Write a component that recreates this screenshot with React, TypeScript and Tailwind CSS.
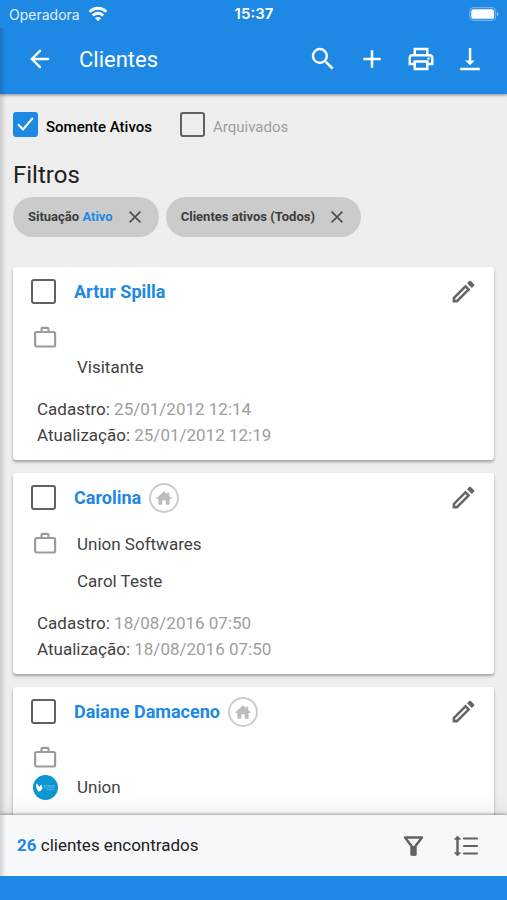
import { ReactNode } from 'react';
import { MdSearch, MdAdd, MdOutlinePrint } from 'react-icons/md';
import { ArrowLeft } from 'lucide-react';

type Client = {
  name: string;
  home?: boolean;
  company?: string;
  person: string;
  logo?: boolean;
  created?: string;
  updated?: string;
};

const clients: Client[] = [
  { name: 'Artur Spilla', person: 'Visitante', created: '25/01/2012 12:14', updated: '25/01/2012 12:19' },
  {
    name: 'Carolina',
    home: true,
    company: 'Union Softwares',
    person: 'Carol Teste',
    created: '18/08/2016 07:50',
    updated: '18/08/2016 07:50',
  },
  { name: 'Daiane Damaceno', home: true, person: 'Union', logo: true },
];

function WifiIcon() {
  return (
    <svg viewBox="0 0 20 16" className="h-4 w-5" fill="none" stroke="#fff" strokeWidth="2.8" aria-hidden="true">
      <path d="M1.600 5.700a12 12 0 0 1 16.800 0" />
      <path d="M4.800 9.400a7.400 7.400 0 0 1 10.400 0" />
      <path d="M10 15.200 7 12.300a4.200 4.200 0 0 1 6 0z" fill="#fff" stroke="none" />
    </svg>
  );
}

function BatteryIcon() {
  return (
    <svg viewBox="0 0 30 14" className="h-3.5 w-[30px]" aria-hidden="true">
      <rect x="0.700" y="0.700" width="26" height="12.600" rx="4" fill="none" stroke="#6fb2ee" strokeWidth="1.200" />
      <rect x="2.200" y="2.200" width="23" height="9.600" rx="2.600" fill="#fff" />
      <path d="M28 5v4c.9-.3 1.400-1.100 1.400-2S28.900 5.300 28 5z" fill="#8fc4f3" />
    </svg>
  );
}

function DownloadIcon() {
  return (
    <svg viewBox="0 0 30 30" className="size-[30px]" fill="currentColor" aria-hidden="true">
      <path d="M13.800 4h2.500v12.500h3.500L15 21.200l-4.800-4.700h3.600zM5.200 23.800h19.600v2.500H5.200z" />
    </svg>
  );
}

function PencilIcon() {
  return (
    <svg viewBox="0 0 24 24" className="size-[29px]" fill="currentColor" aria-hidden="true">
      <path
        fillRule="evenodd"
        d="M13.700 6.300 3 17v4h4L17.700 10.300zM13.700 9.200l1.100 1.100L6.200 18.900H5.100v-1.100z"
      />
      <path d="M14.900 5.100 16.700 3.300c.4-.4 1-.4 1.400 0l2.600 2.600c.4.4.4 1 0 1.400l-1.800 1.800z" />
    </svg>
  );
}

function BriefcaseIcon() {
  return (
    <svg viewBox="0 0 24 24" className="size-6" fill="none" stroke="#9c9c9c" strokeWidth="2.200" aria-hidden="true">
      <rect x="2.100" y="7" width="20" height="14.500" rx="1.500" />
      <path d="M8.500 7V4A1.200 1.200 0 0 1 9.700 2.800h4.600A1.200 1.200 0 0 1 15.500 4v3" />
    </svg>
  );
}

function HomeBadge() {
  return (
    <span className="ml-2 flex size-[30px] items-center justify-center rounded-full border-2 border-[#cdcdcd]">
      <svg viewBox="0 0 16 14" className="h-3.5 w-4" fill="#bdbdbd" aria-hidden="true">
        <path d="M8 .3 11.300 3.300V1.500h2v3.600L15.800 7.400 15.200 8H13.600v5.700H9.700V9.300H6.300v4.400H2.400V8H.8L.2 7.400z" />
      </svg>
    </span>
  );
}

function CompanyLogo() {
  return (
    <svg viewBox="0 0 25 25" className="size-[25px]" aria-hidden="true">
      <circle cx="12.500" cy="12.500" r="12.500" fill="#0b96d1" />
      <path d="M3.300 8.600c1.600.7 2.500 2 2.900 3.400.6-1.100 1.500-1.900 2.700-2.200-.5 1.300-.2 2.200.7 3.300-.6 1.900-2 3.300-4.300 3.500C3.600 14.600 2.900 11.600 3.300 8.600z" fill="#fff" />
      <path d="M10.500 13.200 21.800 12.600M13 14.800l8.800-.2" stroke="#6cc3e6" strokeWidth=".6" />
      <path d="M10.800 10.800h11" stroke="#4fb4de" strokeWidth="1.800" strokeDasharray="1.400 .5" />
    </svg>
  );
}

function CheckBox({ label, checked, children }: { label?: string; checked?: boolean; children?: ReactNode }) {
  return (
    <label className="flex items-start">
      <span className="grid size-[25px]">
        <input
          type="checkbox"
          defaultChecked={checked}
          aria-label={label}
          className="peer col-start-1 row-start-1 size-[25px] appearance-none rounded-[3px] border-2 border-[#616161] checked:border-[#1e88e5] checked:bg-[#1e88e5]"
        />
        <svg
          viewBox="0 0 25 25"
          className="pointer-events-none invisible col-start-1 row-start-1 size-[25px] peer-checked:visible"
          fill="none"
          stroke="#fff"
          strokeWidth="2"
          aria-hidden="true"
        >
          <path d="M5 12.200l5 5.300L19.800 6" />
        </svg>
      </span>
      {children}
    </label>
  );
}

function Chip({ children, name }: { children: ReactNode; name: string }) {
  return (
    <span className="flex h-10 items-center rounded-full bg-[#cbcbcb] pr-[18px] pl-[15px] text-[13px] font-bold text-[#3c3c3c]">
      {children}
      <button type="button" aria-label={`Remover ${name}`} className="ml-4">
        <svg viewBox="0 0 12 12" className="size-3" stroke="#4a4a4a" strokeWidth="1.500" aria-hidden="true">
          <path d="M.6.6l10.800 10.800M11.400.6.6 11.400" />
        </svg>
      </button>
    </span>
  );
}

function ClientCard({ client }: { client: Client }) {
  return (
    <article className="min-h-[193px] shrink-0 rounded-[3px] bg-white pt-1 pb-3 text-[17px] text-[#424242] shadow-[0_2px_3px_rgba(0,0,0,0.32)]">
      <div className="flex h-[42px] items-center pr-4 pl-[18px]">
        <CheckBox label={`Selecionar ${client.name}`} />
        <a href="#" className="ml-[18px] text-[18px] font-bold text-[#1e88e5]">
          {client.name}
        </a>
        {client.home && <HomeBadge />}
        <button type="button" aria-label={`Editar ${client.name}`} className="ml-auto text-[#666]">
          <PencilIcon />
        </button>
      </div>
      <div className={`mt-1.5 flex pl-5 ${client.company ? 'h-[38px]' : 'h-[30px]'}`}>
        <span className="w-11 pt-1.5">
          <BriefcaseIcon />
        </span>
        {client.company && <span className="leading-[38px]">{client.company}</span>}
      </div>
      <div className="flex h-[38px] items-center pl-5">
        <span className="w-11">{client.logo && <CompanyLogo />}</span>
        <span>{client.person}</span>
      </div>
      {client.created && (
        <div className="mt-[9px] pl-6 leading-[26px]">
          <p>
            Cadastro: <span className="text-[#9e9e9e]">{client.created}</span>
          </p>
          <p>
            Atualização: <span className="text-[#9e9e9e]">{client.updated}</span>
          </p>
        </div>
      )}
    </article>
  );
}

export default function App() {
  return (
    <div className="relative flex h-screen flex-col bg-[#eee] font-['Roboto',sans-serif] text-[#212121]">
      <header className="z-10 shrink-0 bg-[#1e88e5] text-white shadow-[0_1px_3px_rgba(0,0,0,0.45)]">
        <div className="grid h-7 grid-cols-3 items-center pr-2 pl-[9px] font-['Inter',sans-serif] text-[14px]">
          <span className="flex items-center gap-2 text-[#e3f1fd]">
            Operadora
            <WifiIcon />
          </span>
          <span className="text-center text-[15px] font-semibold">15:37</span>
          <span className="justify-self-end">
            <BatteryIcon />
          </span>
        </div>
        <div className="flex h-[66px] items-center pr-[22px] pb-1 pl-[26px]">
          <button type="button" aria-label="Voltar">
            <ArrowLeft size={28} strokeWidth={2} />
          </button>
          <h1 className="ml-[25px] text-[22px]">Clientes</h1>
          <div className="ml-auto flex gap-[19px]">
            <button type="button" aria-label="Buscar">
              <MdSearch size={30} />
            </button>
            <button type="button" aria-label="Adicionar">
              <MdAdd size={30} />
            </button>
            <button type="button" aria-label="Imprimir">
              <MdOutlinePrint size={30} />
            </button>
            <button type="button" aria-label="Baixar">
              <DownloadIcon />
            </button>
          </div>
        </div>
      </header>

      <main className="min-h-0 flex-1 overflow-y-auto px-[13px] pt-[18px] [scrollbar-width:none]">
        <div className="flex gap-7 text-[15px]">
          <CheckBox checked>
            <span className="mt-1 ml-2 font-medium text-black">Somente Ativos</span>
          </CheckBox>
          <CheckBox>
            <span className="mt-1 ml-2 text-[#9e9e9e]">Arquivados</span>
          </CheckBox>
        </div>
        <h2 className="mt-5 text-[24px] leading-8">Filtros</h2>
        <div className="mt-1.5 flex gap-[7px]">
          <Chip name="Situação">
            <span>
              Situação <span className="text-[#1e88e5]">Ativo</span>
            </span>
          </Chip>
          <Chip name="Clientes ativos">
            <span>Clientes ativos (Todos)</span>
          </Chip>
        </div>
        <div className="mt-[30px] flex flex-col gap-[13px]">
          {clients.map((client) => (
            <ClientCard key={client.name} client={client} />
          ))}
        </div>
      </main>

      <footer className="z-10 shrink-0 bg-[#f7f8fa] shadow-[0_-1px_3px_rgba(0,0,0,0.35),0_-8px_16px_rgba(0,0,0,0.06)]">
        <div className="flex h-[61px] items-center pr-7 pl-[17px]">
          <p className="text-[17px]">
            <span className="font-bold text-[#1e88e5]">26</span> clientes encontrados
          </p>
          <button type="button" aria-label="Filtrar" className="ml-auto">
            <svg viewBox="0 0 22 22" className="size-[22px]" fill="none" stroke="#616161" strokeWidth="2.400" aria-hidden="true">
              <path d="M2 2.500h17L12.500 11v8.500h-4V11z" strokeLinejoin="round" />
              <path d="M10.500 11v9.500" strokeWidth="4.500" />
            </svg>
          </button>
          <button type="button" aria-label="Ordenar" className="ml-7">
            <svg viewBox="0 0 26 22" className="h-[22px] w-[26px]" fill="none" stroke="#616161" strokeWidth="2.200" aria-hidden="true">
              <path d="M4.500 3v16" strokeWidth="2.400" />
              <path d="M4.500 1 7.500 4.300h-6zM4.500 21 1.500 17.700h6z" fill="#616161" strokeWidth=".8" strokeLinejoin="round" />
              <path d="M11 3.500h13M11 11h13M11 18.500h13" strokeLinecap="round" />
            </svg>
          </button>
        </div>
        <div className="h-6 bg-[#1e88e5]" />
      </footer>

      <div className="pointer-events-none absolute top-7 bottom-6 left-0 z-20 w-1.5 bg-linear-to-r from-black/15 to-transparent" />
    </div>
  );
}
